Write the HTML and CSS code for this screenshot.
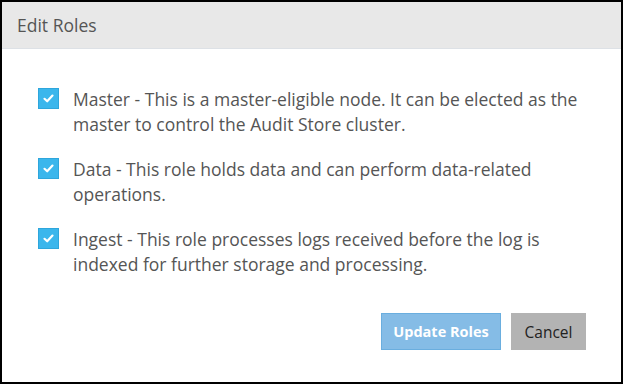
FILE: index.html
```html
<!DOCTYPE html>
<html lang="en">
<head>
  <meta charset="UTF-8">
  <title>Edit Roles</title>
  <link rel="stylesheet" href="styles.css">
</head>
<body>
  <div class="dialog">
    <div class="dialog-header">Edit Roles</div>

    <div class="dialog-body">
      <div class="role-list">
        <label class="role">
          <span class="check">
            <svg width="13" height="13" viewBox="0 0 13 13"><path d="M2.5 6.8 L5.2 9.3 L10.5 3.6" fill="none" stroke="#fff" stroke-width="2.2" stroke-linecap="round" stroke-linejoin="round"/></svg>
          </span>
          <span class="role-text">Master - This is a master-eligible node. It can be elected as the master to control the Audit Store cluster.</span>
        </label>
        <label class="role">
          <span class="check">
            <svg width="13" height="13" viewBox="0 0 13 13"><path d="M2.5 6.8 L5.2 9.3 L10.5 3.6" fill="none" stroke="#fff" stroke-width="2.2" stroke-linecap="round" stroke-linejoin="round"/></svg>
          </span>
          <span class="role-text">Data - This role holds data and can perform data-related operations.</span>
        </label>
        <label class="role">
          <span class="check">
            <svg width="13" height="13" viewBox="0 0 13 13"><path d="M2.5 6.8 L5.2 9.3 L10.5 3.6" fill="none" stroke="#fff" stroke-width="2.2" stroke-linecap="round" stroke-linejoin="round"/></svg>
          </span>
          <span class="role-text">Ingest - This role processes logs received before the log is indexed for further storage and processing.</span>
        </label>
      </div>

      <div class="actions">
        <button class="btn btn-primary">Update Roles</button>
        <button class="btn btn-cancel">Cancel</button>
      </div>
    </div>
  </div>
</body>
</html>
```

FILE: styles.css
```css
html, body {
  margin: 0;
  padding: 0;
}
body {
  font-family: 'Open Sans', 'Liberation Sans', sans-serif;
  background-color: #fff;
}
.dialog {
  width: 623px;
  height: 384px;
  box-sizing: border-box;
  border: 2px solid #000;
  background-color: #fff;
}
.dialog-header {
  height: 46px;
  line-height: 46px;
  padding-left: 15px;
  background-color: #e8e8e8;
  border-bottom: 1px solid #dde1e6;
  color: #555;
  font-size: 17.5px;
}
.dialog-body {
  padding: 38px 35px 0 36px;
}
.role-list {
  display: flex;
  flex-direction: column;
  gap: 20px;
}
.role {
  display: flex;
  align-items: flex-start;
  gap: 14px;
  cursor: pointer;
}
.check {
  flex: none;
  width: 21px;
  height: 21px;
  margin-top: 1px;
  box-sizing: border-box;
  border: 1px solid #2ea6dc;
  background-color: #3bb6ec;
  display: flex;
  align-items: center;
  justify-content: center;
}
.role-text {
  font-size: 17.5px;
  line-height: 25px;
  color: #555;
}
.actions {
  display: flex;
  justify-content: flex-end;
  gap: 10px;
  margin-top: 36px;
}
.btn {
  height: 37px;
  box-sizing: border-box;
  font-family: 'Open Sans', 'Liberation Sans', sans-serif;
  cursor: pointer;
  border-radius: 0;
}
.btn-primary {
  width: 120px;
  background-color: #85bce6;
  border: 1px solid #6aaedf;
  color: #fff;
  font-size: 14.5px;
  font-weight: bold;
}
.btn-cancel {
  width: 75px;
  background-color: #b3b3b3;
  border: none;
  color: #222;
  font-size: 15.5px;
}
```
